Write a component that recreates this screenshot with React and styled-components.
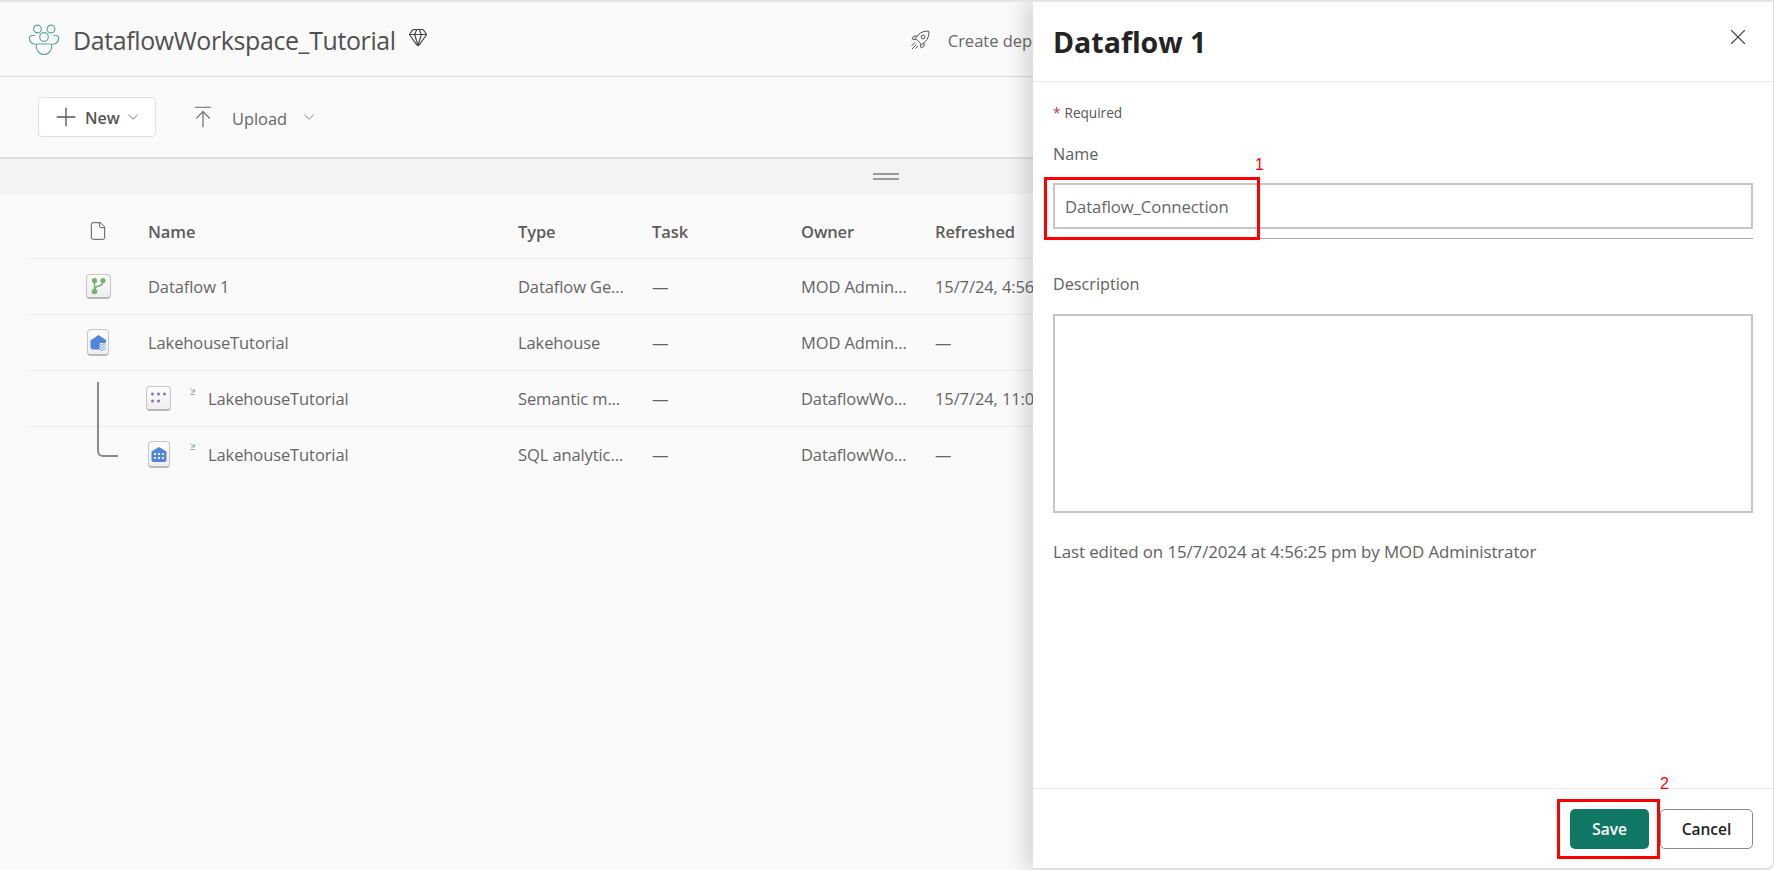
import React from 'react'
import styled, { createGlobalStyle } from 'styled-components'
import { ArrowUpToLine, ChevronDown, File, Gem, Plus, X } from 'lucide-react'

const FONT = '"Open Sans", "Noto Sans", "Liberation Sans", sans-serif'

const GlobalStyle = createGlobalStyle`
  html, body {
    margin: 0;
    padding: 0;
    background: #fafafa;
    font-family: ${FONT};
  }
  * { box-sizing: border-box; }
`

const Page = styled.div`
  position: relative;
  width: 1774px;
  height: 870px;
  overflow: hidden;
  background: #fafafa;
  color: #555;
  border-top: 2px solid #e4e4e4;
`

const Header = styled.header`
  height: 75px;
  display: flex;
  align-items: center;
  padding: 2px 0 0 28px;
  border-bottom: 1px solid #dcdcdc;
  white-space: nowrap;
`

const Title = styled.h1`
  margin: 0 0 0 13px;
  font-size: 24.9px;
  font-weight: 500;
  letter-spacing: -0.35px;
  color: #505050;
`

const DiamondWrap = styled.span`
  display: flex;
  margin: 0 0 6px 12px;
  color: #444;
`

const DeployAction = styled.div`
  width: 122px;
  flex: none;
  display: flex;
  align-items: center;
  gap: 18px;
  margin-left: 482px;
  overflow: hidden;
  font-size: 16.5px;
  color: #666;
`

const Toolbar = styled.div`
  height: 82px;
  display: flex;
  align-items: center;
  padding: 0 0 0 38px;
  border-bottom: 2px solid #e0e0e0;
`

const NewButton = styled.button`
  width: 118px;
  height: 40px;
  display: flex;
  align-items: center;
  padding: 0 0 0 12px;
  font-family: ${FONT};
  font-size: 16px;
  font-weight: 600;
  color: #555;
  background: #fff;
  border: 1px solid #e0e0e0;
  border-radius: 4px;
`

const NewLabel = styled.span`
  margin: 2px 4px 0;
`

const UploadButton = styled.div`
  display: flex;
  align-items: center;
  margin-left: 34px;
  font-size: 16.4px;
  color: #666;
`

const UploadLabel = styled.span`
  margin: 2px 13px 0 16px;
`

const SplitBand = styled.div`
  height: 35px;
  display: flex;
  align-items: center;
  padding-left: 873px;
  background: #f3f3f3;
`

const Grip = styled.span`
  width: 26px;
  height: 7px;
  border-top: 2px solid #9a9a9a;
  border-bottom: 2px solid #9a9a9a;
`

const TableArea = styled.section`
  position: relative;
  margin-left: 28px;
  padding-top: 10px;
`

const Row = styled.div`
  height: ${p => (p.$head ? 55 : 56)}px;
  display: grid;
  grid-template-columns: 120px 370px 134px 149px 134px 98px;
  align-items: center;
  border-bottom: 1px solid ${p => (p.$last ? 'transparent' : '#ececec')};
  font-size: 16.5px;
  font-weight: ${p => (p.$head ? 600 : 400)};
  letter-spacing: -0.1px;
  color: ${p => (p.$head ? '#5c5c5c' : '#666')};
  white-space: nowrap;
`

const ClippedCell = styled.div`
  overflow: hidden;
`

const IconCell = styled.div`
  display: flex;
  justify-content: center;
  padding-left: 20px;
`

const NameCell = styled.div`
  display: flex;
  align-items: center;
  min-width: 0;
`

const ChildIcon = styled.span`
  width: 25px;
  display: flex;
  justify-content: center;
  margin-left: -2px;
`

const LinkMark = styled.span`
  width: 18px;
  display: flex;
  align-self: flex-start;
  margin: 2px 0 0 19px;
`

const Tile = styled.span`
  width: ${p => p.$w || 25}px;
  height: ${p => p.$h || 25}px;
  display: flex;
  align-items: center;
  justify-content: center;
  background: linear-gradient(#fcfcfc, #eeeeee);
  border: 1px solid #c6c6c6;
  border-bottom: 2px solid #b8b8b8;
  border-radius: 4px;
`

const TreeLine = styled.span`
  position: absolute;
  left: 69px;
  top: 188px;
  width: 21px;
  height: 75px;
  border-left: 2px solid #8b8b8b;
  border-bottom: 2px solid #8b8b8b;
  border-bottom-left-radius: 6px;
`

const Panel = styled.aside`
  position: absolute;
  top: -2px;
  right: 0;
  bottom: 0;
  width: 741px;
  display: flex;
  flex-direction: column;
  background: #fff;
  border-top: 2px solid #e4e4e4;
  border-bottom: 2px solid #e0e0e0;
  border-right: 1px solid #e0e0e0;
  border-bottom-right-radius: 8px;
  box-shadow: -10px 0 18px rgba(0, 0, 0, 0.13);
`

const PanelHead = styled.div`
  height: 80px;
  flex: none;
  display: flex;
  align-items: center;
  justify-content: space-between;
  padding: 0 22px 0 20px;
  border-bottom: 1px solid #ebebeb;
`

const PanelTitle = styled.h2`
  margin: 0;
  font-size: 28.5px;
  font-weight: 700;
  color: #242424;
`

const CloseButton = styled.span`
  display: flex;
  margin-bottom: 9px;
  color: #444;
`

const PanelBody = styled.div`
  flex: 1;
  padding: 22px 20px 0 20px;
`

const RequiredNote = styled.div`
  font-size: 13.6px;
  line-height: 18px;
  color: #555;
`

const Star = styled.span`
  margin-right: 4px;
  color: #c4314b;
`

const FieldLabel = styled.div`
  margin-top: ${p => p.$top}px;
  font-size: 16.2px;
  line-height: 22px;
  color: #616161;
`

const NameInput = styled.div`
  height: 46px;
  margin-top: 18px;
  padding-left: 10px;
  display: flex;
  align-items: center;
  font-size: 16.7px;
  letter-spacing: -0.1px;
  color: #666;
  border: 2px solid #c6c6c6;
`

const NameUnderline = styled.div`
  height: 1px;
  margin-top: 9px;
  background: #a8a8a8;
`

const DescriptionBox = styled.div`
  height: 199px;
  margin-top: 19px;
  border: 2px solid #c6c6c6;
`

const EditedNote = styled.div`
  margin-top: 27px;
  font-size: 16.9px;
  letter-spacing: -0.1px;
  color: #616161;
`

const PanelFoot = styled.div`
  height: 80px;
  flex: none;
  display: flex;
  justify-content: flex-end;
  gap: 11px;
  padding: 20px 20px 0 0;
  border-top: 1px solid #ebebeb;
`

const FootButton = styled.button`
  height: 40px;
  width: ${p => (p.$primary ? 79 : 93)}px;
  font-family: ${FONT};
  font-size: 15.5px;
  font-weight: 600;
  color: ${p => (p.$primary ? '#fff' : '#242424')};
  background: ${p => (p.$primary ? '#117865' : '#fff')};
  border: ${p => (p.$primary ? 'none' : '1px solid #8a8a8a')};
  border-radius: 5px;
`

const Callout = styled.span`
  position: absolute;
  left: ${p => p.$x}px;
  top: ${p => p.$y}px;
  width: ${p => p.$w}px;
  height: ${p => p.$h}px;
  border: 3px solid #ff0000;
`

const CalloutNumber = styled.span`
  position: absolute;
  left: ${p => p.$x}px;
  top: ${p => p.$y}px;
  font-family: "Liberation Sans", sans-serif;
  font-size: 16px;
  line-height: 18px;
  color: #ff0000;
`

const PeopleIcon = () => (
  <svg width="32" height="32" viewBox="0 0 32 32" fill="none" stroke="#58ab9c" strokeWidth="1.2">
    <circle cx="9.500" cy="5" r="3.900" />
    <circle cx="23" cy="5" r="3.900" />
    <circle cx="16" cy="13" r="4.300" />
    <path d="M7 11.500H4C2.500 11.500 1.500 12.600 1.500 14c0 3.500 2.400 6 6 6.400" />
    <path d="M25.500 11.500h2.500c1.500 0 2.500 1.100 2.500 2.500 0 3.500-2.400 6-6 6.400" />
    <path d="M9.500 20h13c.8 0 1.300.5 1.300 1.300v.7c0 4.700-3.300 8.500-7.800 8.500S8.200 26.700 8.200 22v-.7c0-.8.500-1.300 1.300-1.300z" />
  </svg>
)

const RocketIcon = () => (
  <svg width="20" height="20" viewBox="0 0 20 20" fill="none" stroke="#555" strokeWidth="1" style={{ flex: 'none' }}>
    <path d="M18.800 1.200c-4-.5-7.800.9-10.600 3.700L5.500 8.300l6.200 6.200 3.400-2.700c2.800-2.800 4.200-6.600 3.700-10.600z" />
    <circle cx="13" cy="7" r="1.900" />
    <path d="M7 6H3.800L2 8.800l4 1M14 13v3.200L11.200 18l-1-4" />
    <path d="M5 12.500 1.500 16M6.500 14.500 2 19M8 16l-2.500 2.500" />
  </svg>
)

const BranchGlyph = () => (
  <svg width="17" height="18" viewBox="0 0 17 18" fill="none">
    <path d="M4.500 4v10M13 4c0 3.500-2 4.500-4 5s-4.500 1-4.500 4" stroke="#72b272" strokeWidth="1.500" />
    <circle cx="4.500" cy="3.500" r="2.600" fill="#72b272" />
    <circle cx="13" cy="3.500" r="2.600" fill="#72b272" />
    <circle cx="4.500" cy="14.500" r="2.800" fill="#72b272" />
  </svg>
)

const LakehouseGlyph = () => (
  <svg width="17" height="17" viewBox="0 0 17 17">
    <path d="M8.500 1 16 6v3H9.500v6.500H3C1.600 15.500.5 14.400.5 13V6.500z" fill="#4f86dc" />
    <path d="M8 10.500c1-1 1.500-1 2.500 0s1.500 1 2.500 0 1.500-1 2.500 0M8 13c1-1 1.500-1 2.500 0s1.500 1 2.500 0 1.500-1 2.500 0M8 15.500c1-1 1.500-1 2.500 0s1.500 1 2.500 0 1.500-1 2.500 0" fill="none" stroke="#5b8fdf" strokeWidth="1" />
  </svg>
)

const DotsGlyph = () => (
  <svg width="17" height="12" viewBox="0 0 17 12" fill="#8d68c9">
    <circle cx="2.500" cy="2" r="1.500" />
    <circle cx="8.500" cy="2" r="1.500" />
    <circle cx="14.500" cy="2" r="1.500" />
    <circle cx="2.500" cy="9" r="1.500" />
    <circle cx="8.500" cy="9" r="1.500" />
  </svg>
)

const EndpointGlyph = () => (
  <svg width="16" height="15" viewBox="0 0 16 15">
    <path d="M8 0 15.500 4.500V13c0 1.100-.9 2-2 2h-11c-1.100 0-2-.9-2-2V4.500z" fill="#4f86dc" />
    <g fill="#e8effb">
      <rect x="3" y="6" width="2" height="2" />
      <rect x="7" y="6" width="2" height="2" />
      <rect x="11" y="6" width="2" height="2" />
      <rect x="3" y="10" width="2" height="2" />
      <rect x="7" y="10" width="2" height="2" />
      <rect x="11" y="10" width="2" height="2" />
    </g>
  </svg>
)

const ShortcutMark = () => (
  <LinkMark>
    <svg width="6" height="7" viewBox="0 0 6 7" fill="none" stroke="#7fa89f" strokeWidth=".9">
      <path d="M.5 .5 4.500 3.500M4.500 1v3H1M0 6.500h5" />
    </svg>
  </LinkMark>
)

const rows = [
  { name: 'Dataflow 1', type: 'Dataflow Ge...', owner: 'MOD Admin...', refreshed: '15/7/24, 4:56:25 pm', icon: <Tile $w={25} $h={25}><BranchGlyph /></Tile> },
  { name: 'LakehouseTutorial', type: 'Lakehouse', owner: 'MOD Admin...', refreshed: '—', icon: <Tile $w={22} $h={27}><LakehouseGlyph /></Tile> },
  { name: 'LakehouseTutorial', type: 'Semantic m...', owner: 'DataflowWo...', refreshed: '15/7/24, 11:02:13 am', child: true, icon: <Tile $w={25} $h={25}><DotsGlyph /></Tile> },
  { name: 'LakehouseTutorial', type: 'SQL analytic...', owner: 'DataflowWo...', refreshed: '—', child: true, icon: <Tile $w={22} $h={27}><EndpointGlyph /></Tile> },
]

const App = () => {
  return (
    <Page>
      <GlobalStyle />
      <Header>
        <PeopleIcon />
        <Title>DataflowWorkspace_Tutorial</Title>
        <DiamondWrap><Gem size={20} strokeWidth={1.4} /></DiamondWrap>
        <DeployAction>
          <RocketIcon />
          Create deployment pipeline
        </DeployAction>
      </Header>
      <Toolbar>
        <NewButton>
          <Plus size={30} strokeWidth={1.05} />
          <NewLabel>New</NewLabel>
          <ChevronDown size={18} strokeWidth={1} />
        </NewButton>
        <UploadButton>
          <ArrowUpToLine size={26} strokeWidth={1.1} />
          <UploadLabel>Upload</UploadLabel>
          <ChevronDown size={18} strokeWidth={1} />
        </UploadButton>
      </Toolbar>
      <SplitBand><Grip /></SplitBand>
      <TableArea>
        <Row $head>
          <IconCell><File size={20} strokeWidth={1.2} /></IconCell>
          <div>Name</div>
          <div>Type</div>
          <div>Task</div>
          <div>Owner</div>
          <div>Refreshed</div>
        </Row>
        {rows.map((row, i) => (
          <Row key={i} $last={i === rows.length - 1}>
            {row.child ? <div /> : <IconCell>{row.icon}</IconCell>}
            <NameCell>
              {row.child && <ChildIcon>{row.icon}</ChildIcon>}
              {row.child && <ShortcutMark />}
              {row.name}
            </NameCell>
            <div>{row.type}</div>
            <div>—</div>
            <div>{row.owner}</div>
            <ClippedCell>{row.refreshed}</ClippedCell>
          </Row>
        ))}
        <TreeLine />
      </TableArea>
      <Panel>
        <PanelHead>
          <PanelTitle>Dataflow 1</PanelTitle>
          <CloseButton><X size={26} strokeWidth={1} /></CloseButton>
        </PanelHead>
        <PanelBody>
          <RequiredNote><Star>*</Star>Required</RequiredNote>
          <FieldLabel $top={21}>Name</FieldLabel>
          <NameInput>Dataflow_Connection</NameInput>
          <NameUnderline />
          <FieldLabel $top={34}>Description</FieldLabel>
          <DescriptionBox />
          <EditedNote>Last edited on 15/7/2024 at 4:56:25 pm by MOD Administrator</EditedNote>
        </PanelBody>
        <PanelFoot>
          <FootButton $primary>Save</FootButton>
          <FootButton>Cancel</FootButton>
        </PanelFoot>
      </Panel>
      <Callout $x={1044} $y={175} $w={216} $h={63} />
      <CalloutNumber $x={1255} $y={154}>1</CalloutNumber>
      <Callout $x={1557} $y={797} $w={103} $h={60} />
      <CalloutNumber $x={1660} $y={773}>2</CalloutNumber>
    </Page>
  )
}

export default App
